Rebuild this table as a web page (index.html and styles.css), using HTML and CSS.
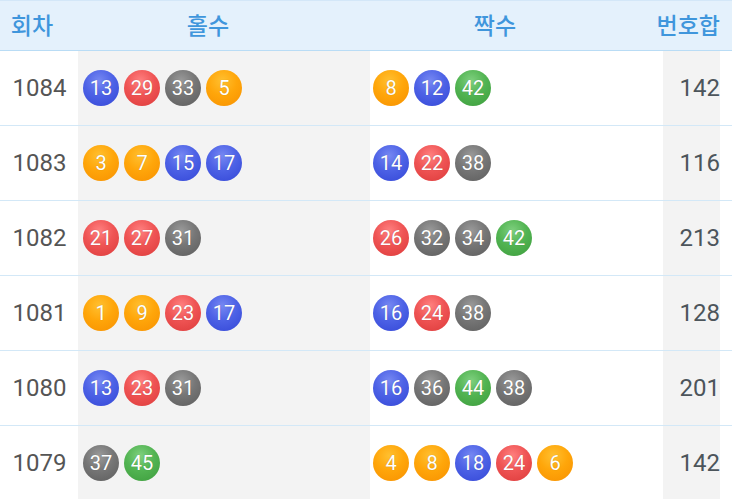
FILE: index.html
```html
<!DOCTYPE html>
<html lang="ko">
<head>
<meta charset="utf-8">
<link rel="stylesheet" href="styles.css">
</head>
<body>
<div class="board">
  <div class="head">
    <div class="h h-round">회차</div>
    <div class="h h-odd">홀수</div>
    <div class="h h-even">짝수</div>
    <div class="h h-sum">번호합</div>
  </div>

  <div class="row">
    <div class="c round">1084</div>
    <div class="c odd"><span class="ball b">13</span><span class="ball r">29</span><span class="ball g">33</span><span class="ball o">5</span></div>
    <div class="c even"><span class="ball o">8</span><span class="ball b">12</span><span class="ball gr">42</span></div>
    <div class="c sum">142</div>
    <div class="c pad"></div>
  </div>
  <div class="row">
    <div class="c round">1083</div>
    <div class="c odd"><span class="ball o">3</span><span class="ball o">7</span><span class="ball b">15</span><span class="ball b">17</span></div>
    <div class="c even"><span class="ball b">14</span><span class="ball r">22</span><span class="ball g">38</span></div>
    <div class="c sum">116</div>
    <div class="c pad"></div>
  </div>
  <div class="row">
    <div class="c round">1082</div>
    <div class="c odd"><span class="ball r">21</span><span class="ball r">27</span><span class="ball g">31</span></div>
    <div class="c even"><span class="ball r">26</span><span class="ball g">32</span><span class="ball g">34</span><span class="ball gr">42</span></div>
    <div class="c sum">213</div>
    <div class="c pad"></div>
  </div>
  <div class="row">
    <div class="c round">1081</div>
    <div class="c odd"><span class="ball o">1</span><span class="ball o">9</span><span class="ball r">23</span><span class="ball b">17</span></div>
    <div class="c even"><span class="ball b">16</span><span class="ball r">24</span><span class="ball g">38</span></div>
    <div class="c sum">128</div>
    <div class="c pad"></div>
  </div>
  <div class="row">
    <div class="c round">1080</div>
    <div class="c odd"><span class="ball b">13</span><span class="ball r">23</span><span class="ball g">31</span></div>
    <div class="c even"><span class="ball b">16</span><span class="ball g">36</span><span class="ball gr">44</span><span class="ball g">38</span></div>
    <div class="c sum">201</div>
    <div class="c pad"></div>
  </div>
  <div class="row">
    <div class="c round">1079</div>
    <div class="c odd"><span class="ball g">37</span><span class="ball gr">45</span></div>
    <div class="c even"><span class="ball o">4</span><span class="ball o">8</span><span class="ball b">18</span><span class="ball r">24</span><span class="ball o">6</span></div>
    <div class="c sum">142</div>
    <div class="c pad"></div>
  </div>
</div>
</body>
</html>
```

FILE: styles.css
```css
* { box-sizing: border-box; }
html, body { margin: 0; padding: 0; background: #fff; }
body {
  width: 732px;
  height: 499px;
  overflow: hidden;
  font-family: Roboto, "Noto Sans CJK KR", sans-serif;
}
.board { width: 732px; }

.head {
  display: grid;
  grid-template-columns: 64px 288px 286px 82px 12px;
  height: 51px;
  background: #e4f1fc;
  border-top: 1px solid #d3e7f8;
  border-bottom: 1px solid #b9dcf5;
  align-items: center;
}
.h {
  font-family: "Noto Sans CJK KR", sans-serif;
  font-size: 23px;
  font-weight: 500;
  color: #3f96dc;
  text-align: center;
  line-height: 1;
  padding-bottom: 2px;
}
.h-sum { text-align: right; }

.row {
  display: grid;
  grid-template-columns: 78px 292px 293px 57px 12px;
  height: 75px;
  border-bottom: 1px solid #d3e8f7;
}
.c {
  display: flex;
  align-items: center;
  height: 74px;
}
.round {
  justify-content: center;
  font-size: 24px;
  color: #555;
  padding-left: 1px;
}
.odd {
  background: #f3f3f3;
  padding-left: 5px;
  gap: 5px;
}
.even {
  background: #fff;
  padding-left: 3px;
  gap: 5px;
}
.sum {
  background: #f3f3f3;
  justify-content: flex-end;
  font-size: 24px;
  color: #4c555b;
}
.pad { background: #fff; }

.ball {
  width: 36px;
  height: 36px;
  border-radius: 50%;
  display: flex;
  align-items: center;
  justify-content: center;
  color: #fff;
  font-size: 20px;
  text-shadow: 0 0 1px rgba(0,0,0,0.25);
}
.b  { background: radial-gradient(circle at 45% 30%, #7688f2 0%, #4d62e6 45%, #3346d6 100%); }
.r  { background: radial-gradient(circle at 45% 30%, #ff8080 0%, #ef5454 45%, #dc3a3a 100%); }
.g  { background: radial-gradient(circle at 45% 30%, #9a9a9a 0%, #767676 45%, #5c5c5c 100%); }
.o  { background: radial-gradient(circle at 45% 30%, #ffc030 0%, #ffa60a 45%, #f79000 100%); }
.gr { background: radial-gradient(circle at 45% 30%, #7fd07f 0%, #52b452 45%, #3c9c3c 100%); }
```
